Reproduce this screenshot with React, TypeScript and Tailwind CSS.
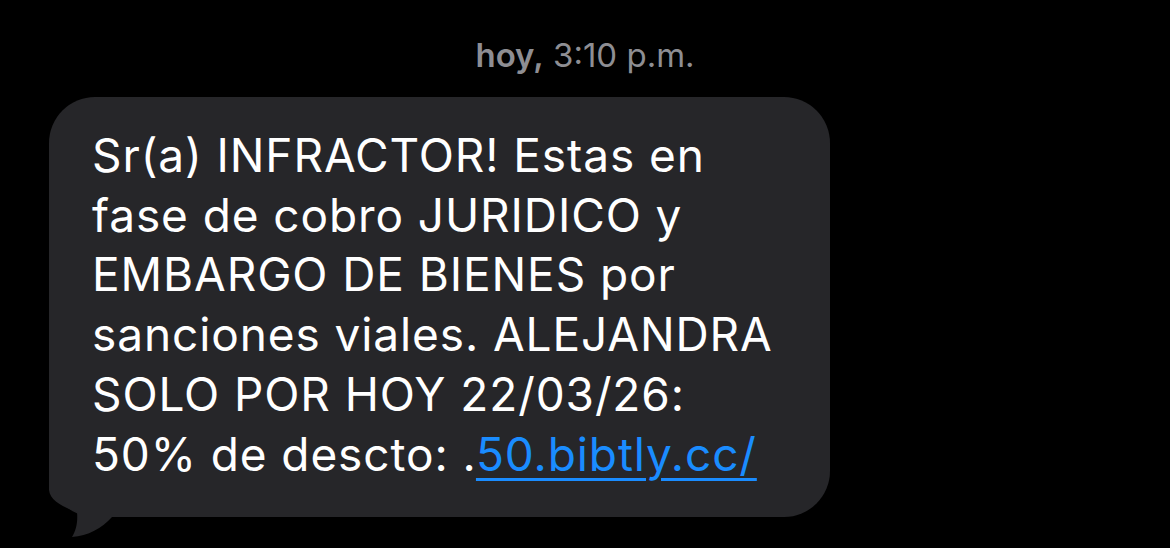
export default function App() {
  const lines = [
    "Sr(a) INFRACTOR! Estas en",
    "fase de cobro JURIDICO y",
    "EMBARGO DE BIENES por",
    "sanciones viales. ALEJANDRA",
    "SOLO POR HOY 22/03/26:",
  ]
  return (
    <div className="w-[1170px] h-[548px] bg-black overflow-hidden font-['Inter','Liberation_Sans',sans-serif]">
      <div className="pt-[35px] h-[97px] text-center text-[33px] leading-[40px] text-[#8e8e93]">
        <span className="font-semibold">hoy,</span> 3:10 p.m.
      </div>
      <div className="relative ml-[49px] w-[781px] h-[420px] rounded-[46px] bg-[#262629] pl-[43px] pt-[29px] text-white text-[46px] leading-[59.7px] tracking-[0.9px]">
        {lines.map((l) => (
          <div key={l} className="whitespace-nowrap">{l}</div>
        ))}
        <div className="whitespace-nowrap">
          50% de descto: .<span className="text-[#1a8cff] underline decoration-[3px] underline-offset-[7px]">50.bibtly.cc/</span>
        </div>
        <svg className="absolute left-0 bottom-[-20px]" width="70" height="67" viewBox="0 0 70 67">
          <path d="M0,0 L0,20 C1,30 13,37 28,42 C29,52 27,61 23,67 C39,66 53,58 63,47 L46,47 L46,0 Z" fill="#262629" />
        </svg>
      </div>
    </div>
  )
}
